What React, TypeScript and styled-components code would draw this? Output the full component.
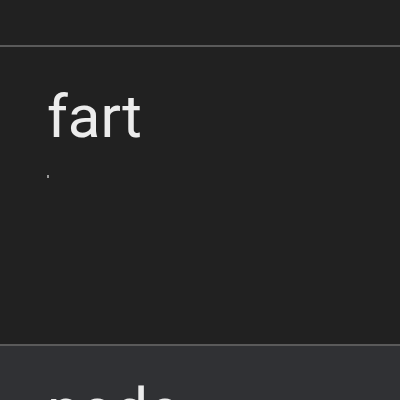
import React from "react";
import styled, { createGlobalStyle } from "styled-components";

const Global = createGlobalStyle`
  html, body { margin: 0; padding: 0; background: #212121; }
  body { font-family: Roboto, "Noto Sans", sans-serif; overflow: hidden; }
`;

const List = styled.div`
  display: flex;
  flex-direction: column;
  width: 400px;
  height: 400px;
  overflow: hidden;
  background: #212121;
`;

const Spacer = styled.div`
  height: 45px;
  flex: none;
`;

const Item = styled.div<{ $active?: boolean }>`
  flex: none;
  height: 299px;
  box-sizing: border-box;
  border-top: 2px solid #5a5a5a;
  background: ${(p) => (p.$active ? "#303134" : "#212121")};
  padding: ${(p) => (p.$active ? "29px" : "35px")} 47px 0 47px;
  display: flex;
  flex-direction: column;
`;

const Title = styled.div`
  font-size: 60px;
  line-height: 70px;
  color: #ececec;
  font-weight: 400;
`;

const Dot = styled.span`
  display: block;
  width: 2px;
  height: 3px;
  margin-top: 23px;
  background: #9a9a9a;
`;

export default function App() {
  return (
    <>
      <Global />
      <List>
        <Spacer />
        <Item>
          <Title>fart</Title>
          <Dot />
        </Item>
        <Item $active>
          <Title>node</Title>
        </Item>
      </List>
    </>
  );
}
